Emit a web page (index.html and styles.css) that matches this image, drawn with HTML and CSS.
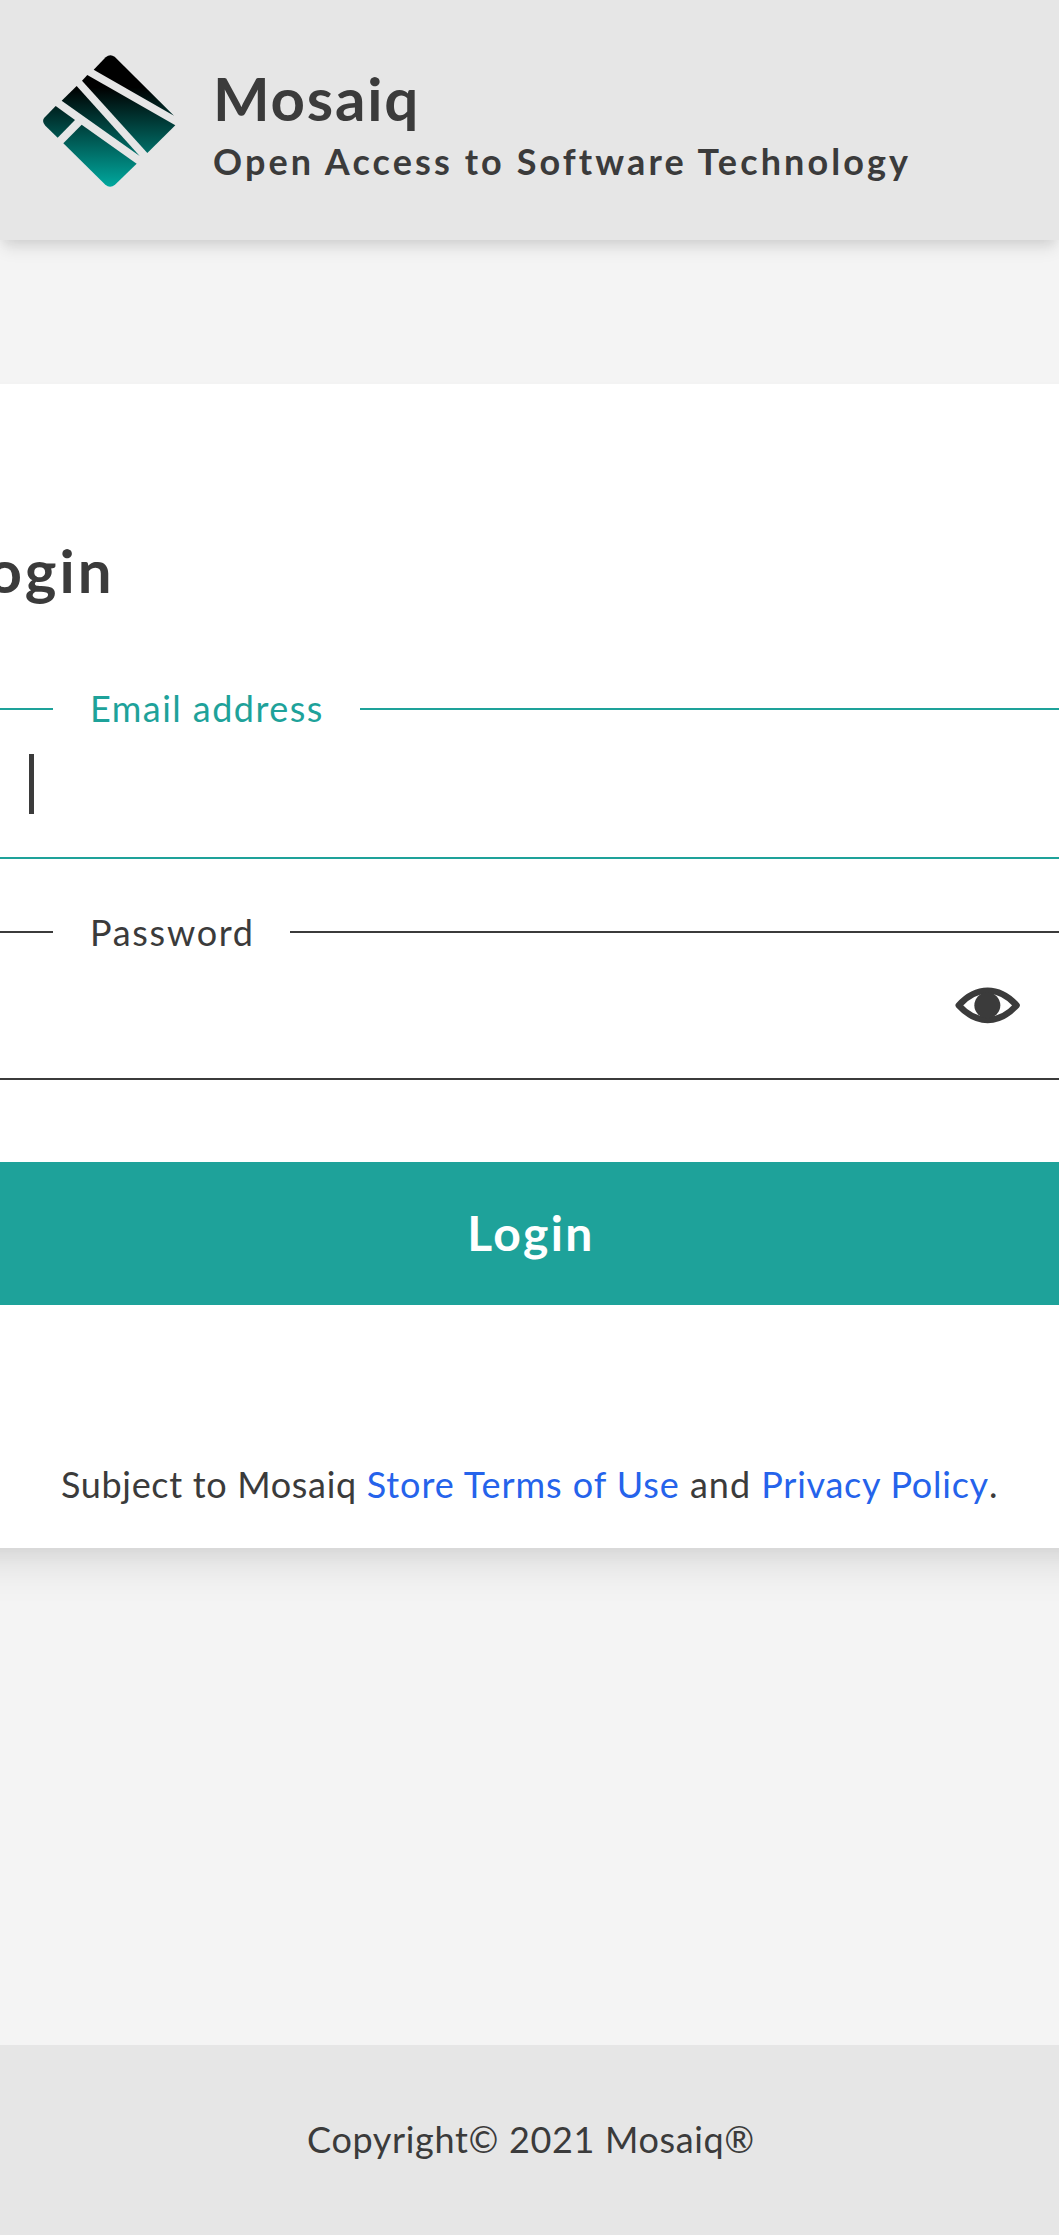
FILE: index.html
```html
<!DOCTYPE html>
<html lang="en">
<head>
<meta charset="utf-8">
<title>Mosaiq Login</title>
<link rel="stylesheet" href="styles.css">
</head>
<body>
<header class="header">
  <svg class="logo" viewBox="66 42 402 402" aria-hidden="true">
    <defs>
      <linearGradient id="logo-fill" gradientUnits="userSpaceOnUse" x1="0" y1="42" x2="0" y2="442">
        <stop offset="0" stop-color="#000"/><stop offset=".25" stop-color="#000"/><stop offset="1" stop-color="#00a99f"/>
      </linearGradient>
    </defs>
    <g fill="url(#logo-fill)">
      <path d="M221 89L257 52Q270 40 284 50L462 227Z"/>
      <path d="M202 105L466 256L382 339L186 122Z"/>
      <path d="M170 138L359 348L125 182Z"/>
      <path d="M107 198L165 240L113 293L76 257Q64 244 73 233Z"/>
      <path d="M185 254L350 371L285 434Q270 446 256 434L130 310Z"/>
    </g>
  </svg>
  <div class="brand">
    <h1 class="name">Mosaiq</h1>
    <p class="tagline">Open Access to Software Technology</p>
  </div>
</header>
<main class="main">
  <form class="card">
    <h2 class="title">Login</h2>
    <fieldset class="field field-active">
      <legend class="label">Email address</legend>
      <div class="caret"></div>
    </fieldset>
    <fieldset class="field field-password">
      <legend class="label">Password</legend>
      <svg class="eye" viewBox="72 78 201 117" aria-hidden="true">
        <path d="M86 136Q126 92 173 92Q220 92 260 136Q220 180 173 180Q126 180 86 136Z" fill="none" stroke="#3b3b3b" stroke-width="19" stroke-linejoin="round"/>
        <circle cx="172" cy="136" r="39" fill="#3b3b3b"/>
      </svg>
    </fieldset>
    <button class="submit" type="button">Login</button>
    <p class="terms">Subject to Mosaiq <a class="link-terms">Store Terms of Use</a><span class="and"> and </span><a class="link-privacy">Privacy Policy</a>.</p>
  </form>
</main>
<footer class="footer">Copyright© 2021 Mosaiq®</footer>
</body>
</html>
```
FILE: styles.css
```css
* { box-sizing: border-box; }

body {
  margin: 0;
  min-height: 2235px;
  display: flex;
  flex-direction: column;
  overflow: hidden;
  background: #f4f4f4;
  color: #3b3b3b;
  font: 36px/44px Lato, "Open Sans", sans-serif;
}

h1, h2, p { margin: 0; }

.header {
  display: flex;
  align-items: flex-start;
  height: 240px;
  padding: 54px 42px 0;
  background: #e6e6e6;
  box-shadow: 0 10.5px 15.75px -2.6px rgba(0, 0, 0, .1), 0 5.25px 10.5px -2.6px rgba(0, 0, 0, .06);
}
.logo { width: 134px; height: 134px; }
.brand { padding: 12px 0 0 37px; }
.name { font-size: 60px; line-height: 64px; font-weight: 700; letter-spacing: 1.8px; }
.tagline { margin-top: 9px; font-weight: 700; letter-spacing: 3.1px; white-space: nowrap; }

.main { flex: 1; padding-top: 144px; }
.card {
  height: 1164px;
  margin: 0 -60px;
  padding: 150px 24px 0;
  background: #fff;
  box-shadow: 0 26.25px 39.4px -7.9px rgba(0, 0, 0, .1), 0 10.5px 15.75px -5.25px rgba(0, 0, 0, .05);
}
.title { margin-left: -9px; font-size: 60px; line-height: 72px; font-weight: 700; letter-spacing: 3px; }

.field {
  height: 172px;
  min-width: 0;
  margin: 81px 0 0;
  padding: 0;
  border: 2px solid #3b3b3b;
}
.field-active { border-color: #1ea29a; }
.field-password { height: 170px; margin-top: 51px; }
.label { margin-left: 87px; padding: 0 35px 0 37px; letter-spacing: 1.7px; white-space: nowrap; }
.field-active .label { line-height: 42px; padding: 0 36px 2px 37px; color: #1ea29a; letter-spacing: 1.45px; }
.caret { width: 5px; height: 60px; margin: 23px 0 0 63px; background: #3b3b3b; }
.eye { display: block; width: 67px; height: 39px; margin: 32px 72px 0 auto; }

.submit {
  display: block;
  width: 100%;
  height: 143.5px;
  margin-top: 81.5px;
  padding: 0 0 0 3px;
  border: 0;
  background: #1ea29a;
  color: #fff;
  font: 700 48px/58px Lato, "Open Sans", sans-serif;
  letter-spacing: 2.4px;
}
.terms { margin-top: 157px; text-align: center; white-space: nowrap; letter-spacing: .68px; }
.terms a { color: #2563eb; }
.link-terms { letter-spacing: .93px; }
.and { letter-spacing: 1px; }
.link-privacy { letter-spacing: .75px; }

.footer {
  height: 190px;
  padding: 72px 0 0 3px;
  background: #e6e6e6;
  text-align: center;
  letter-spacing: .65px;
}
```
